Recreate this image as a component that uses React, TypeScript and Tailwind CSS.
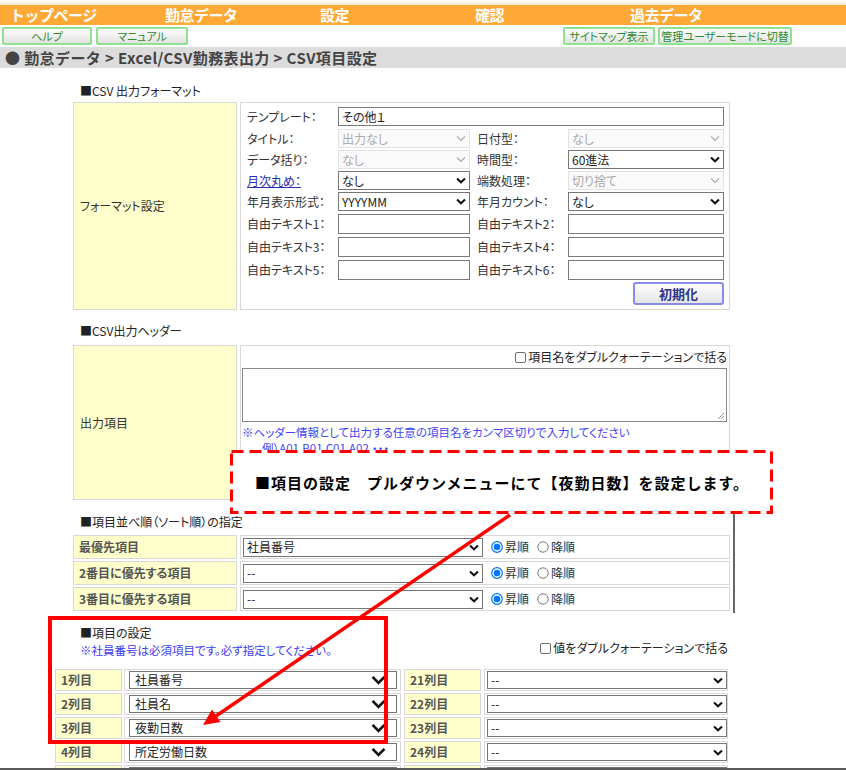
import React from "react";

const cx = (...a: (string | false | undefined)[]) => a.filter(Boolean).join(" ");

function Chev({ big, disabled }: { big?: boolean; disabled?: boolean }) {
  if (big)
    return (
      <svg width="15" height="10" viewBox="0 0 15 10">
        <path d="M1.5 1.8 L7.5 7.8 L13.5 1.8" fill="none" stroke="#111" strokeWidth="2.6" />
      </svg>
    );
  return (
    <svg width="10" height="7" viewBox="0 0 10 7">
      <path
        d="M1 1.5 L5 5.3 L9 1.5"
        fill="none"
        stroke={disabled ? "#b0b0b0" : "#111"}
        strokeWidth={disabled ? 1.3 : 2}
      />
    </svg>
  );
}

function Sel({
  value,
  className,
  disabled,
  big,
}: {
  value: string;
  className?: string;
  disabled?: boolean;
  big?: boolean;
}) {
  return (
    <div
      className={cx(
        "flex items-center justify-between border",
        disabled ? "border-[#e2e2e2] bg-[#fafafa] text-[#a9a9a9]" : "border-[#767676] bg-white text-[#222]",
        className
      )}
    >
      <span className={cx("whitespace-nowrap", big ? "pl-[5px]" : "pl-[3px]")}>{value}</span>
      <span className={cx("flex items-center", big ? "pr-[10px]" : "pr-[3px]")}>
        <Chev big={big} disabled={disabled} />
      </span>
    </div>
  );
}

function Inp({ value, className }: { value?: string; className?: string }) {
  return (
    <div className={cx("flex items-center border border-[#7a7a7a] bg-white text-[#222] pl-[3px] whitespace-nowrap", className)}>
      {value}
    </div>
  );
}

function L({ children, className }: { children: React.ReactNode; className?: string }) {
  return <div className={cx("w-[91px] shrink-0 text-[#333] whitespace-nowrap", className)}>{children}</div>;
}

function Radio({ on }: { on?: boolean }) {
  return (
    <svg width="12" height="12" viewBox="0 0 12 12">
      {on ? (
        <>
          <circle cx="6" cy="6" r="5.3" fill="white" stroke="#0075ff" strokeWidth="1.2" />
          <circle cx="6" cy="6" r="3.3" fill="#0075ff" />
        </>
      ) : (
        <circle cx="6" cy="6" r="5.2" fill="white" stroke="#7a7a7a" strokeWidth="1" />
      )}
    </svg>
  );
}

function Check() {
  return <span className="inline-block w-[11px] h-[11px] border border-[#707070] rounded-[2px] bg-white mr-[2px]" />;
}

function TopBtn({ children, className }: { children: React.ReactNode; className?: string }) {
  return (
    <div
      className={cx(
        "h-[18px] border-2 border-[#8fe38f] rounded-[2px] bg-gradient-to-b from-white to-[#e2e2e2] text-[#2e8b2e] text-[11px] leading-[14px] flex items-center justify-center whitespace-nowrap",
        className
      )}
    >
      {children}
    </div>
  );
}

const cell = "border border-[#d8d8d8]";
const yellow = "bg-[#ffffcc] border border-[#d8d8d8]";

export default function App() {
  const sortRows = ["最優先項目", "2番目に優先する項目", "3番目に優先する項目"];
  const sortVals = ["社員番号", "--", "--"];
  const items = [
    ["1列目", "社員番号", "21列目"],
    ["2列目", "社員名", "22列目"],
    ["3列目", "夜勤日数", "23列目"],
    ["4列目", "所定労働日数", "24列目"],
    ["5列目", "出勤日数", "25列目"],
  ];
  return (
    <div className="relative w-[846px] h-[770px] overflow-hidden bg-white text-[#333] font-['Noto_Sans_CJK_JP','Noto_Sans',sans-serif] [font-feature-settings:'palt'] text-[12px] leading-[14px]">
      {/* top strip */}
      <div className="h-[5px] bg-gradient-to-b from-white to-[#fde9cf]" />
      {/* nav */}
      <div className="h-[20px] bg-[#fea936] flex items-center pl-[10px] text-white font-bold text-[15px] leading-[20px] [font-feature-settings:normal]">
        {["トップページ", "勤怠データ", "設定", "確認", "過去データ"].map((t) => (
          <div key={t} className="w-[155px] shrink-0 tracking-[-0.5px]">
            {t}
          </div>
        ))}
      </div>
      {/* buttons */}
      <div className="h-[22px] pt-[2px] flex pl-[2px] pr-[54px]">
        <TopBtn className="w-[90px]">ヘルプ</TopBtn>
        <TopBtn className="w-[92px] ml-[4px]">マニュアル</TopBtn>
        <TopBtn className="w-[92px] ml-auto">サイトマップ表示</TopBtn>
        <TopBtn className="w-[134px] ml-[3px]">管理ユーザーモードに切替</TopBtn>
      </div>
      {/* breadcrumb */}
      <div className="h-[21px] bg-[#dcdcdc] flex items-center pl-[5px] text-[15px] font-bold tracking-[0.4px] text-[#444] [font-feature-settings:normal] whitespace-nowrap">
        ● 勤怠データ &gt; Excel/CSV勤務表出力 &gt; CSV項目設定
      </div>

      <div className="pl-[55px]">
        {/* CSV出力フォーマット */}
        <div className="h-[34px] flex items-end pb-[4px] pl-[25px] text-[#222]">■CSV 出力フォーマット</div>
        <div className="ml-[18px] w-[657px] h-[208px] flex gap-[3px]">
          <div className={cx("w-[164px] shrink-0 flex items-center pl-[6px] text-[#333]", yellow)}>フォーマット設定</div>
          <div className={cx("flex-1 flex flex-col pl-[6px] pr-[5px] pt-[4px]", cell)}>
            <div className="flex h-[19px] items-center">
              <L>テンプレート：</L>
              <Inp value="その他１" className="w-[386px] h-[19px]" />
            </div>
            <div className="flex h-[19px] items-center mt-[3px]">
              <L>タイトル：</L>
              <Sel value="出力なし" disabled className="w-[132px] h-[19px]" />
              <L className="ml-[7px]">日付型：</L>
              <Sel value="なし" disabled className="w-[156px] h-[19px]" />
            </div>
            <div className="flex h-[19px] items-center mt-[2px]">
              <L>データ括り：</L>
              <Sel value="なし" disabled className="w-[132px] h-[19px]" />
              <L className="ml-[7px]">時間型：</L>
              <Sel value="60進法" className="w-[156px] h-[19px]" />
            </div>
            <div className="flex h-[19px] items-center mt-[2px]">
              <L>
                <span className="text-[#2b2bb8] underline">月次丸め：</span>
              </L>
              <Sel value="なし" className="w-[132px] h-[19px]" />
              <L className="ml-[7px]">端数処理：</L>
              <Sel value="切り捨て" disabled className="w-[156px] h-[19px]" />
            </div>
            <div className="flex h-[19px] items-center mt-[2px]">
              <L>年月表示形式：</L>
              <Sel value="YYYYMM" className="w-[132px] h-[19px]" />
              <L className="ml-[7px]">年月カウント：</L>
              <Sel value="なし" className="w-[156px] h-[19px]" />
            </div>
            {[
              ["自由テキスト1：", "自由テキスト2："],
              ["自由テキスト3：", "自由テキスト4："],
              ["自由テキスト5：", "自由テキスト6："],
            ].map(([a, b]) => (
              <div key={a} className="flex h-[20px] items-center mt-[3px]">
                <L>{a}</L>
                <Inp className="w-[132px] h-[20px]" />
                <L className="ml-[7px]">{b}</L>
                <Inp className="w-[156px] h-[20px]" />
              </div>
            ))}
            <div className="flex justify-end mt-[2px]">
              <div className="w-[91px] h-[23px] border-2 border-[#8a8ae8] rounded-[3px] bg-gradient-to-b from-white to-[#e4e4e4] flex items-center justify-center font-bold text-[13px] text-[#33338a]">
                初期化
              </div>
            </div>
          </div>
        </div>

        {/* CSV出力ヘッダー */}
        <div className="h-[35px] flex items-end pb-[7px] pl-[25px] text-[#222]">■CSV出力ヘッダー</div>
        <div className="ml-[18px] w-[657px] h-[155px] flex gap-[3px]">
          <div className={cx("w-[164px] shrink-0 flex items-center pl-[6px] text-[#333]", yellow)}>出力項目</div>
          <div className={cx("flex-1 flex flex-col pl-[1px] pr-[2px] pt-[4px]", cell)}>
            <div className="flex justify-end items-center h-[14px] text-[#222] whitespace-nowrap">
              <Check />
              項目名をダブルクォーテーションで括る
            </div>
            <div className="relative mt-[4px] h-[54px] border border-[#8a8a8a] bg-white">
              <svg className="absolute right-[1px] bottom-[1px]" width="8" height="8" viewBox="0 0 8 8">
                <path d="M7 1 L1 7 M7 4 L4 7" stroke="#999" strokeWidth="1" />
              </svg>
            </div>
            <div className="mt-[3px] text-[11.5px] text-[#4343f5] whitespace-nowrap">
              ※ヘッダー情報として出力する任意の項目名をカンマ区切りで入力してください
            </div>
            <div className="mt-[2px] pl-[20px] text-[11.5px] text-[#4343f5] whitespace-nowrap">例）A01,B01,C01,A02,・・・</div>
          </div>
        </div>

        {/* ソート順 */}
        <div className="h-[35px] flex items-end pb-[6px] pl-[25px] text-[#222]">■項目並べ順（ソート順）の指定</div>
        <div className="ml-[18px] w-[657px] flex flex-col gap-[2px]">
          {sortRows.map((r, i) => (
            <div key={r} className="flex gap-[3px] h-[24px]">
              <div className={cx("w-[164px] shrink-0 flex items-center pl-[5px] font-bold text-[#555]", yellow)}>{r}</div>
              <div className={cx("flex-1 flex items-center pl-[2px]", cell)}>
                <Sel value={sortVals[i]} className="w-[240px] h-[19px]" />
                <div className="flex items-center ml-[8px] gap-[2px] text-[#333]">
                  <Radio on />
                  <span>昇順</span>
                  <span className="ml-[4px]" />
                  <Radio />
                  <span>降順</span>
                </div>
              </div>
            </div>
          ))}
        </div>

        {/* 項目の設定 */}
        <div className="h-[58px] pt-[15px] pb-[12px] pl-[25px] w-[673px] flex justify-between items-end">
          <div className="flex flex-col gap-[3px]">
            <div className="text-[#222]">■項目の設定</div>
            <div className="text-[11.5px] text-[#3b3bf5] whitespace-nowrap">※社員番号は必須項目です。必ず指定してください。</div>
          </div>
          <div className="flex items-center mb-[2px] text-[#222] whitespace-nowrap">
            <Check />
            値をダブルクォーテーションで括る
          </div>
        </div>
        <div className="flex flex-col gap-[2px]">
          {items.map(([a, v, b]) => (
            <div key={a} className="flex h-[22px]">
              <div className={cx("w-[67px] shrink-0 flex items-center pl-[5px] font-bold text-[#555]", yellow)}>{a}</div>
              <div className={cx("w-[277px] ml-[2px] shrink-0 flex items-center pl-[4px] pr-[3px]", cell)}>
                <Sel value={v} big className="flex-1 h-[18px]" />
              </div>
              <div className={cx("w-[77px] ml-[3px] shrink-0 flex items-center pl-[5px] font-bold text-[#555]", yellow)}>{b}</div>
              <div className={cx("w-[244px] ml-[3px] shrink-0 flex items-center pl-[2px] pr-[0px]", cell)}>
                <Sel value="--" className="flex-1 h-[18px]" />
              </div>
            </div>
          ))}
        </div>
      </div>

      {/* overlays */}
      <div className="absolute left-[733px] top-[514px] w-[2px] h-[99px] bg-[#666]" />
      <div className="absolute left-[230px] top-[450px] w-[543px] h-[64px] bg-white flex items-center pl-[25px] pt-[1px] font-bold text-[15px] text-black tracking-[1px] whitespace-nowrap [font-feature-settings:normal]">
        <svg className="absolute inset-0" width="543" height="64" viewBox="0 0 543 64">
          <rect x="1.5" y="1.5" width="540" height="61" fill="none" stroke="#ff0000" strokeWidth="3" strokeDasharray="12 6" />
        </svg>
        <span className="relative">■項目の設定　プルダウンメニューにて【夜勤日数】を設定します。</span>
      </div>
      <div className="absolute left-[48px] top-[616px] w-[340px] h-[128px] border-[4px] border-[#ff0000]" />
      <svg className="absolute left-0 top-0 pointer-events-none" width="846" height="770" viewBox="0 0 846 770">
        <line x1="510" y1="515" x2="216" y2="716" stroke="#ff0000" strokeWidth="3.5" />
        <polygon points="203,725 220.5,722 212,709.5" fill="#ff0000" />
      </svg>
      <div className="absolute left-0 bottom-0 w-full h-[2px] bg-[#5a5a5a]" />
    </div>
  );
}
